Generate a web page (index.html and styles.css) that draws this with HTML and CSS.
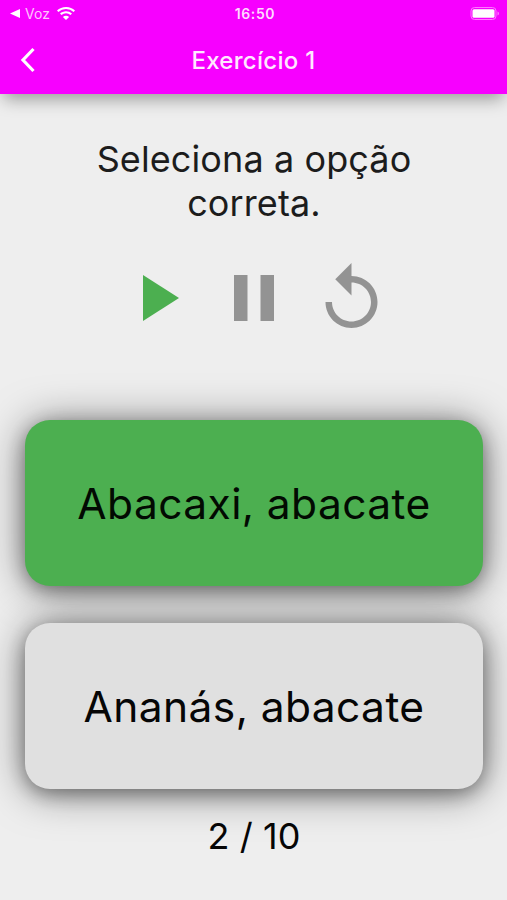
FILE: index.html
```html
<!DOCTYPE html>
<html lang="pt">
<head>
<meta charset="utf-8">
<meta name="viewport" content="width=device-width, initial-scale=1">
<title>Exercício 1</title>
<link rel="stylesheet" href="styles.css">
</head>
<body>
<header class="header">
  <div class="status">
    <div class="carrier">
      <svg class="back-app" viewBox="0 0 10 9"><path d="M10 0v9L0 4.500z"/></svg>
      <span class="carrier-name">Voz</span>
      <svg class="wifi" viewBox="0 0 18 13"><path d="M9 0C5.500 0 2.300 1.300 0 3.500l1.400 1.500a11 11 0 0 1 15.200 0L18 3.500A13 13 0 0 0 9 0z"/><path d="M9 4.300c-2.300 0-4.400.9-6 2.300l1.500 1.500a6.600 6.600 0 0 1 9 0L15 6.600a9 9 0 0 0-6-2.300z"/><path d="M9 8.700c-1.200 0-2.300.4-3.100 1.200L9 13l3.100-3.100A4.400 4.400 0 0 0 9 8.700z"/></svg>
    </div>
    <time class="clock">16:50</time>
    <svg class="battery" viewBox="0 0 30 14"><rect class="battery-case" x="1" y=".5" width="25" height="12" rx="3.500"/><rect x="2.500" y="2.300" width="22" height="8.500" rx="1.500"/><path class="battery-tip" d="M27.500 4.500c2 .8 2 3.200 0 4z"/></svg>
  </div>
  <nav class="bar">
    <svg class="chevron" viewBox="0 0 16 26"><path d="M13.500 2L3 13l10.500 11"/></svg>
    <h1 class="title">Exercício 1</h1>
  </nav>
</header>
<main class="main">
  <p class="prompt">Seleciona a opção<br>correta.</p>
  <div class="controls">
    <svg class="play" viewBox="0 0 36 46"><path d="M0 0v46l36-23z"/></svg>
    <svg class="pause" viewBox="0 0 40 46"><path d="M0 0h13.500v46H0zM26.500 0H40v46H26.500z"/></svg>
    <svg class="replay" viewBox="4 1 16 20"><path d="M12 5V1L7 6l5 5V7c3.310 0 6 2.690 6 6s-2.690 6-6 6-6-2.690-6-6H4c0 4.420 3.580 8 8 8s8-3.580 8-8-3.580-8-8-8z"/></svg>
  </div>
  <button class="option option-correct">Abacaxi, abacate</button>
  <button class="option">Ananás, abacate</button>
  <p class="progress">2 / 10</p>
</main>
</body>
</html>
```

FILE: styles.css
```css
* { box-sizing: border-box; }
body { margin: 0; height: 900px; overflow: hidden; background: #eee; color: #1c1c1c; font-family: Inter, sans-serif; }
.header { height: 94px; background: #f700ff; color: #ffe8ff; box-shadow: 0 9px 16px -4px rgba(0, 0, 0, .36); }
.status { display: grid; grid-template-columns: 1fr auto 1fr; align-items: center; height: 27px; padding: 0 7px 0 10px; }
.carrier { display: flex; align-items: center; fill: #fff; }
.back-app { width: 10px; height: 9px; }
.carrier-name { margin: 0 7px 0 5px; font-size: 14px; color: #ffc4ff; }
.wifi { width: 18px; height: 13px; }
.clock { font-size: 14px; font-weight: 600; letter-spacing: .6px; color: #ffd8ff; }
.battery { justify-self: end; width: 30px; height: 14px; fill: #fff; }
.battery-case { fill: none; stroke: #ff78ff; }
.battery-tip { fill: #ff78ff; }
.bar { display: grid; grid-template-columns: 40px 1fr 40px; align-items: center; height: 66px; }
.chevron { width: 16px; height: 26px; margin-left: 20px; fill: none; stroke: #fff; stroke-width: 3.2; }
.title { margin: 0; text-align: center; font-size: 24px; font-weight: 500; letter-spacing: .3px; }
.main { display: flex; flex-direction: column; align-items: center; padding: 43px 24px 0 25px; }
.prompt { margin: 0; text-align: center; font-size: 36px; line-height: 44px; letter-spacing: .1px; }
.controls { display: flex; align-items: center; height: 66px; margin-top: 37px; padding-left: 12px; }
.play { width: 36px; height: 46px; margin: 5px 55px 0 0; fill: #4caf50; }
.pause { width: 40px; height: 46px; margin: 5px 51px 0 0; fill: #939393; }
.replay { width: 53px; height: 65px; fill: #939393; }
.option { position: relative; width: 458px; height: 166px; margin: 92px 0 0; padding: 0; border: 0; border-radius: 25px; background: #e0e0e0; color: #060606; font: 42.5px Inter, sans-serif; letter-spacing: .4px; box-shadow: 0 5px 18px rgba(0, 0, 0, .32), 0 3px 42px rgba(0, 0, 0, .5); }
.option + .option { margin-top: 37px; }
.option-correct { background: #4caf50; color: #020a02; }
/* lets the lower card's shadow darken the gap without tinting the card above */
.option:last-of-type { clip-path: inset(-37px -60px -80px); }
.progress { margin: 25px 0 0; font-size: 36px; line-height: 44px; letter-spacing: .1px; color: #060606; }
```
